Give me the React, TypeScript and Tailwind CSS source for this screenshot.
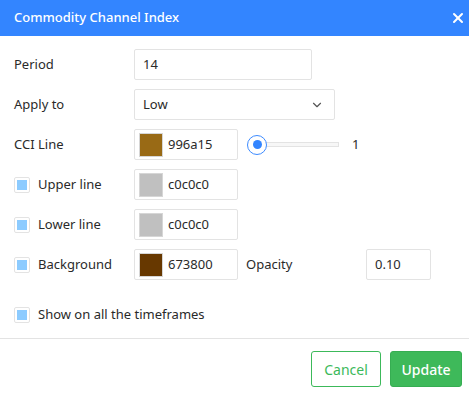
import { X, ChevronDown } from 'lucide-react'

function Check() {
  return (
    <div className="w-[16px] h-[16px] border border-[#e3e3e3] rounded-[2px] bg-white flex items-center justify-center">
      <div className="w-[10px] h-[10px] bg-[#8ccbff]" />
    </div>
  )
}

function ColorInput({ color, value }: { color: string; value: string }) {
  return (
    <div className="w-[104px] h-[31px] border border-[#e3e3e3] rounded-[2px] flex items-center pl-[4px] gap-[5px]">
      <div
        className="w-[24px] h-[24px] border border-[#d6d6d6]"
        style={{ backgroundColor: color }}
      />
      <span>{value}</span>
    </div>
  )
}

function Row({ children }: { children: React.ReactNode }) {
  return <div className="flex items-center h-[31px]">{children}</div>
}

export default function App() {
  return (
    <div
      className="w-[469px] h-[397px] bg-white text-[13px] text-[#2a2a2a]"
      style={{ fontFamily: '"Noto Sans", "Open Sans", sans-serif' }}
    >
      <header className="h-[36px] bg-[#3385ff] flex items-center justify-between pl-[14px] pr-[3px] text-white">
        <span className="font-medium text-[13px]">Commodity Channel Index</span>
        <X size={16} strokeWidth={3} />
      </header>

      <main className="pl-[14px] pt-[13px] flex flex-col gap-[9px]">
        <Row>
          <span className="w-[120px]">Period</span>
          <div className="w-[178px] h-[31px] border border-[#e3e3e3] rounded-[2px] flex items-center px-[8px]">
            14
          </div>
        </Row>
        <Row>
          <span className="w-[120px]">Apply to</span>
          <div className="w-[201px] h-[31px] border border-[#e3e3e3] rounded-[2px] flex items-center justify-between pl-[8px] pr-[10px]">
            <span>Low</span>
            <ChevronDown size={14} strokeWidth={2} className="text-[#555]" />
          </div>
        </Row>
        <Row>
          <span className="w-[120px]">CCI Line</span>
          <ColorInput color="#996a15" value="996a15" />
          <div className="ml-[9px] w-[92px] relative h-[20px] flex items-center">
            <div className="ml-[8px] w-[84px] h-[5px] border border-[#e3e3e3] bg-[#f7f7f7]" />
            <div className="absolute left-0 top-[0px] w-[20px] h-[20px] rounded-full border-[1.5px] border-[#3d8bff] bg-white flex items-center justify-center">
              <div className="w-[9px] h-[9px] rounded-full bg-[#3385ff]" />
            </div>
          </div>
          <span className="ml-[13px]">1</span>
        </Row>
        <Row>
          <div className="w-[120px] flex items-center gap-[8px]">
            <Check />
            <span>Upper line</span>
          </div>
          <ColorInput color="#c0c0c0" value="c0c0c0" />
        </Row>
        <Row>
          <div className="w-[120px] flex items-center gap-[8px]">
            <Check />
            <span>Lower line</span>
          </div>
          <ColorInput color="#c0c0c0" value="c0c0c0" />
        </Row>
        <Row>
          <div className="w-[120px] flex items-center gap-[8px]">
            <Check />
            <span>Background</span>
          </div>
          <ColorInput color="#673800" value="673800" />
          <span className="ml-[8px] w-[120px]">Opacity</span>
          <div className="w-[65px] h-[31px] border border-[#e3e3e3] rounded-[2px] flex items-center px-[8px]">
            0.10
          </div>
        </Row>
        <div className="flex items-center gap-[8px] mt-[18px] h-[16px]">
          <Check />
          <span>Show on all the timeframes</span>
        </div>
      </main>

      <div className="mt-[15px] border-t border-[#e3e3e3] flex justify-end gap-[9px] pt-[12px] pr-[7px]">
        <button className="w-[70px] h-[36px] border border-[#3cb95a] rounded-[3px] text-[#3cb95a] text-[14px]">
          Cancel
        </button>
        <button className="w-[72px] h-[36px] bg-[#3eb95a] border border-[#36ad52] rounded-[3px] text-white text-[14px] font-medium">
          Update
        </button>
      </div>
    </div>
  )
}
